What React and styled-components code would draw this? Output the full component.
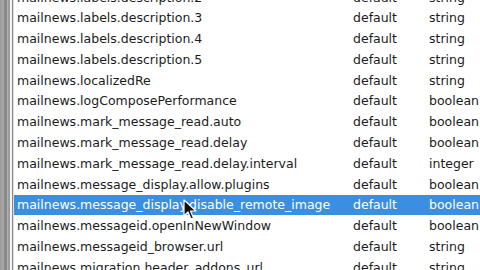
import styled, { createGlobalStyle } from "styled-components";

const GlobalStyle = createGlobalStyle`
  html, body {
    margin: 0;
    padding: 0;
    background: #ffffff;
    overflow: hidden;
  }
  body {
    width: 480px;
    height: 270px;
  }
`;

const prefs = [
  ["mailnews.labels.description.2", "default", "string"],
  ["mailnews.labels.description.3", "default", "string"],
  ["mailnews.labels.description.4", "default", "string"],
  ["mailnews.labels.description.5", "default", "string"],
  ["mailnews.localizedRe", "default", "string"],
  ["mailnews.logComposePerformance", "default", "boolean"],
  ["mailnews.mark_message_read.auto", "default", "boolean"],
  ["mailnews.mark_message_read.delay", "default", "boolean"],
  ["mailnews.mark_message_read.delay.interval", "default", "integer"],
  ["mailnews.message_display.allow.plugins", "default", "boolean"],
  ["mailnews.message_display.disable_remote_image", "default", "boolean"],
  ["mailnews.messageid.openInNewWindow", "default", "boolean"],
  ["mailnews.messageid_browser.url", "default", "string"],
  ["mailnews.migration.header_addons_url", "default", "string"],
];

const SELECTED = 10;

export default function App() {
  return (
    <>
      <GlobalStyle />
      <Window>
        <Frame />
        <List>
          {prefs.map(([name, status, type], i) => (
            <Row key={name} $selected={i === SELECTED}>
              <Cell>{name}</Cell>
              <Cell>{status}</Cell>
              <Cell>{type}</Cell>
            </Row>
          ))}
        </List>
        <Cursor width="14" height="22" viewBox="0 0 14 22">
          <path
            d="M1 1 L1 17 L5 13 L8 20 L10.5 19 L7.5 12 L13 12 Z"
            fill="#111"
            stroke="#fff"
            strokeWidth="1.2"
            strokeLinejoin="round"
          />
        </Cursor>
      </Window>
    </>
  );
}

const Window = styled.div`
  position: relative;
  display: flex;
  width: 480px;
  height: 270px;
  overflow: hidden;
  background: #ffffff;
`;

const Frame = styled.div`
  flex: 0 0 14px;
  height: 100%;
  background: linear-gradient(
    to right,
    #9a9a9a 0px,
    #a8a8a8 3px,
    #bdbdbd 3px,
    #8c8c8c 4px,
    #868686 7px,
    #c8c8c8 7px,
    #9c9c9c 8px,
    #9c9c9c 10px,
    #f4f4f4 10px,
    #f4f4f4 12px,
    #8a8a8a 12px,
    #8a8a8a 13px,
    #dcdcdc 13px
  );
`;

const List = styled.div`
  flex: 1;
  display: flex;
  flex-direction: column;
  margin-top: -13.4px;
`;

const Row = styled.div`
  flex: 0 0 20.8px;
  display: grid;
  grid-template-columns: 336px 76px 1fr;
  align-items: center;
  height: 20.8px;
  padding-left: 3px;
  white-space: nowrap;
  font-family: "DejaVu Sans", Tahoma, sans-serif;
  font-size: 12.5px;
  color: ${(p) => (p.$selected ? "#ffffff" : "#1b1b1b")};
  background: ${(p) => (p.$selected ? "#3a8fe2" : "transparent")};
`;

const Cell = styled.span`
  overflow: hidden;
`;

const Cursor = styled.svg`
  position: absolute;
  left: 183px;
  top: 199px;
`;
